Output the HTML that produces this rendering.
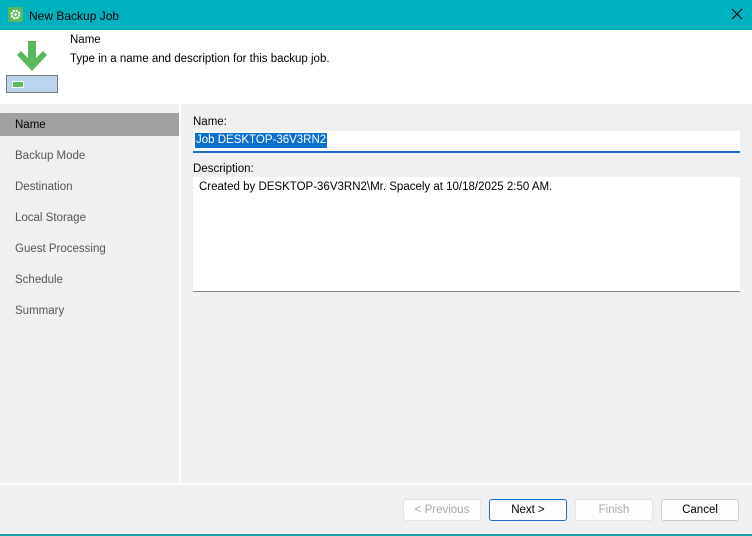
<!DOCTYPE html>
<html><head><style>
body{margin:0;width:752px;height:536px;position:relative;overflow:hidden;background:#f0f0f0;font-family:"Liberation Sans",sans-serif;font-size:11.5px;color:#000}
div{position:absolute;box-sizing:border-box}
.nav{left:0;width:179px;height:23px;line-height:25px;padding-left:15px;color:#555}
.btn{top:499px;width:78px;height:22px;border:1px solid #ccc;border-radius:3px;background:#fdfdfd;text-align:center;line-height:20px}
</style></head><body>
<div style="left:0;top:0;width:752px;height:30px;background:#00b2bf"></div>
<div style="left:8px;top:7px;width:15px;height:15px;background:#5cb85c;border-radius:2px"></div>
<svg style="position:absolute;left:8px;top:7px" width="15" height="15" viewBox="0 0 15 15"><circle cx="7.5" cy="7.5" r="3.8" fill="none" stroke="#fff" stroke-width="2.2" stroke-dasharray="2 1"/><circle cx="7.5" cy="7.5" r="1.3" fill="#fff"/></svg>
<div style="left:29px;top:9px;font-size:12px">New Backup Job</div>
<svg style="position:absolute;left:731px;top:8px" width="12" height="12" viewBox="0 0 12 12"><path d="M1 1L11 11M11 1L1 11" stroke="#000" stroke-width="1.1"/></svg>
<div style="left:0;top:30px;width:752px;height:74px;background:#fff"></div>
<svg style="position:absolute;left:17px;top:41px" width="30" height="31" viewBox="0 0 30 31"><path d="M11 0h8v17l7-7 4 4-15 16L0 14l4-4 7 7z" fill="#5cb85c"/></svg>
<div style="left:6px;top:75px;width:52px;height:18px;border:1px solid #777;background:#bcd5ee"></div>
<div style="left:12px;top:81px;width:10px;height:5px;background:#5cb85c;border:1px solid #fff;box-sizing:content-box"></div>
<div style="left:70px;top:34px">Name</div>
<div style="left:70px;top:53px">Type in a name and description for this backup job.</div>
<div style="left:179px;top:104px;width:2px;height:379px;background:#fff"></div>
<div class="nav" style="top:113px;background:#a0a0a0;color:#000">Name</div>
<div class="nav" style="top:144px">Backup Mode</div>
<div class="nav" style="top:175px">Destination</div>
<div class="nav" style="top:206px">Local Storage</div>
<div class="nav" style="top:237px">Guest Processing</div>
<div class="nav" style="top:268px">Schedule</div>
<div class="nav" style="top:299px">Summary</div>
<div style="left:193px;top:116px">Name:</div>
<div style="left:193px;top:131px;width:547px;height:22px;background:#fff;border-bottom:2px solid #1a6fc4"></div>
<div style="left:195px;top:133px;background:#0b6fd0;color:#fff;padding:0 1px;line-height:15px">Job DESKTOP-36V3RN2</div>
<div style="left:193px;top:163px">Description:</div>
<div style="left:193px;top:177px;width:547px;height:115px;background:#fff;border-bottom:1px solid #888"></div>
<div style="left:199px;top:181px">Created by DESKTOP-36V3RN2\Mr. Spacely at 10/18/2025 2:50 AM.</div>
<div style="left:0;top:483px;width:752px;height:2px;background:#fff"></div>
<div class="btn" style="left:403px;color:#aaa;border-color:#e3e3e3">&lt; Previous</div>
<div class="btn" style="left:489px;border-color:#1a6fc4">Next &gt;</div>
<div class="btn" style="left:575px;color:#aaa;border-color:#e3e3e3">Finish</div>
<div class="btn" style="left:661px">Cancel</div>
<div style="left:0;top:534px;width:752px;height:2px;background:#1aa3a8"></div>
</body></html>
